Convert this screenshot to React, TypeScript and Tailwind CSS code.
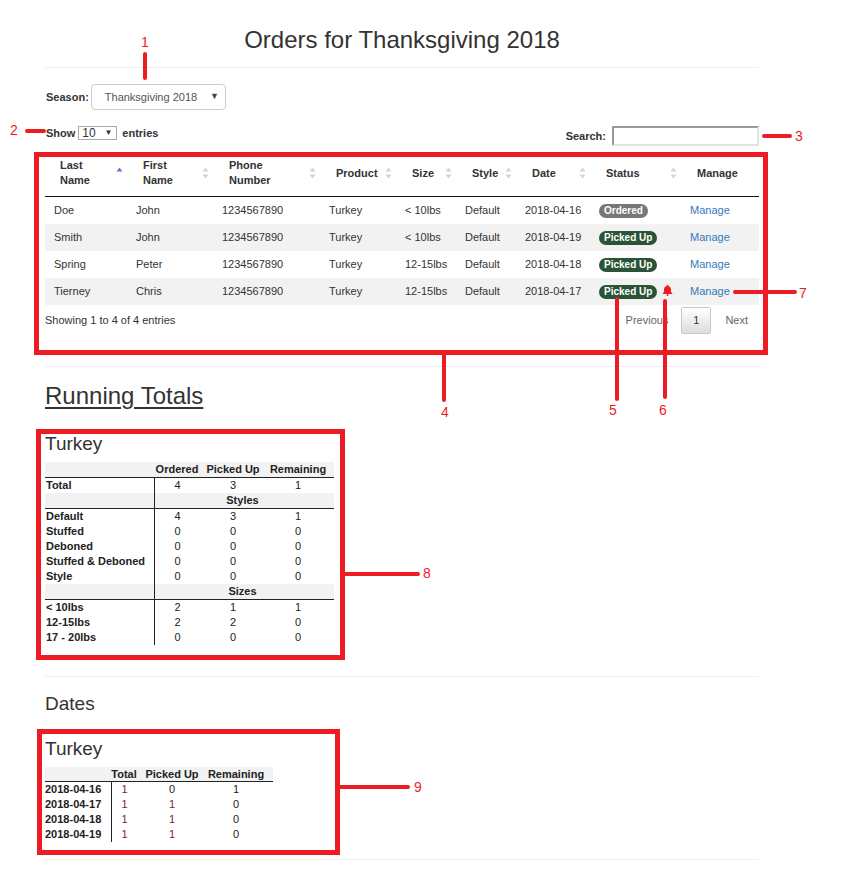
import React from "react";

/** Datos de pedidos */
const orders = [
  { last: "Doe", first: "John", phone: "1234567890", product: "Turkey", size: "< 10lbs", style: "Default", date: "2018-04-16", status: "Ordered", note: false },
  { last: "Smith", first: "John", phone: "1234567890", product: "Turkey", size: "< 10lbs", style: "Default", date: "2018-04-19", status: "Picked Up", note: false },
  { last: "Spring", first: "Peter", phone: "1234567890", product: "Turkey", size: "12-15lbs", style: "Default", date: "2018-04-18", status: "Picked Up", note: false },
  { last: "Tierney", first: "Chris", phone: "1234567890", product: "Turkey", size: "12-15lbs", style: "Default", date: "2018-04-17", status: "Picked Up", note: true },
];

const columns = [
  { label: ["Last", "Name"], w: "w-[81px]", sort: "asc", first: true },
  { label: ["First", "Name"], w: "w-[86px]", sort: "both" },
  { label: ["Phone", "Number"], w: "w-[107px]", sort: "both" },
  { label: ["Product"], w: "w-[76px]", sort: "both" },
  { label: ["Size"], w: "w-[60px]", sort: "both" },
  { label: ["Style"], w: "w-[60px]", sort: "both" },
  { label: ["Date"], w: "w-[74px]", sort: "both" },
  { label: ["Status"], w: "w-[91px]", sort: "both" },
  { label: ["Manage"], w: "w-[79px]", sort: "none" },
];

const styleRows = [
  ["Default", 4, 3, 1],
  ["Stuffed", 0, 0, 0],
  ["Deboned", 0, 0, 0],
  ["Stuffed & Deboned", 0, 0, 0],
  ["Style", 0, 0, 0],
];

const sizeRows = [
  ["< 10lbs", 2, 1, 1],
  ["12-15lbs", 2, 2, 0],
  ["17 - 20lbs", 0, 0, 0],
];

const dateRows = [
  ["2018-04-16", 1, 0, 1],
  ["2018-04-17", 1, 1, 0],
  ["2018-04-18", 1, 1, 0],
  ["2018-04-19", 1, 1, 0],
];

const SortIcon = ({ type }: { type: string }) => {
  if (type === "none") return null;
  return (
    <svg width="7" height="12" viewBox="0 0 7 12" className="shrink-0">
      <polygon points="0.5,4.5 3.5,0.5 6.5,4.5" fill={type === "asc" ? "#6f6fd6" : "#d4d4d4"} />
      {type === "both" && <polygon points="0.5,7.5 3.5,11.5 6.5,7.5" fill="#d4d4d4" />}
    </svg>
  );
};

const Bell = () => (
  <svg width="11" height="12" viewBox="0 0 11 12" className="ml-[5px] -mt-[3px]">
    <path d="M5.5 0.8c-0.5 0-0.8 0.4-0.8 0.8v0.4C3 2.4 2 3.8 2 5.6v2.3L0.6 9.4v0.7h9.8V9.4L9 7.9V5.6C9 3.8 8 2.4 6.3 2V1.6c0-0.4-0.3-0.8-0.8-0.8z" fill="#ed1c24" />
    <circle cx="5.5" cy="11" r="1" fill="#ed1c24" />
  </svg>
);

const Badge = ({ status }: { status: string }) => (
  <span
    className={
      "inline-flex h-[14px] items-center rounded-full px-[5px] text-[10px] font-bold leading-none text-white " +
      (status === "Ordered" ? "bg-[#777777]" : "bg-[#2b5436]")
    }
  >
    {status}
  </span>
);

/** Tabla de totales (Turkey) */
const TotalsSection = () => (
  <div className="w-[289px] text-[11px] leading-[15px] text-[#222]">
    <div className="flex h-[16px] border-b border-[#222] bg-[#f2f2f2] font-bold">
      <div className="w-[109px]" />
      <div className="w-[46px] text-center">Ordered</div>
      <div className="w-[66px] text-center">Picked Up</div>
      <div className="w-[68px] pr-[4px] text-center">Remaining</div>
    </div>
    <div className="flex h-[15px]">
      <div className="w-[109px] pl-[1px] font-bold">Total</div>
      <div className="w-[46px] border-l border-[#222] text-center">4</div>
      <div className="w-[66px] text-center">3</div>
      <div className="w-[68px] pr-[4px] text-center">1</div>
    </div>
    <div className="flex h-[16px] border-b border-[#222] bg-[#f2f2f2] font-bold">
      <div className="w-[109px]" />
      <div className="w-[180px] border-l border-[#222] pr-[4px] text-center">Styles</div>
    </div>
    {styleRows.map((r) => (
      <div key={r[0]} className="flex h-[15px]">
        <div className="w-[109px] pl-[1px] font-bold">{r[0]}</div>
        <div className="w-[46px] border-l border-[#222] text-center">{r[1]}</div>
        <div className="w-[66px] text-center">{r[2]}</div>
        <div className="w-[68px] pr-[4px] text-center">{r[3]}</div>
      </div>
    ))}
    <div className="flex h-[16px] border-b border-[#222] bg-[#f2f2f2] font-bold">
      <div className="w-[109px]" />
      <div className="w-[180px] border-l border-[#222] pr-[4px] text-center">Sizes</div>
    </div>
    {sizeRows.map((r) => (
      <div key={r[0]} className="flex h-[15px]">
        <div className="w-[109px] pl-[1px] font-bold">{r[0]}</div>
        <div className="w-[46px] border-l border-[#222] text-center">{r[1]}</div>
        <div className="w-[66px] text-center">{r[2]}</div>
        <div className="w-[68px] pr-[4px] text-center">{r[3]}</div>
      </div>
    ))}
  </div>
);

/** Tabla por fechas */
const DatesSection = () => (
  <div className="w-[228px] text-[11px] leading-[15px] text-[#222]">
    <div className="flex h-[15px] border-b border-[#222] bg-[#f2f2f2] font-bold leading-[14px]">
      <div className="w-[66px]" />
      <div className="w-[26px] text-center">Total</div>
      <div className="w-[70px] text-center">Picked Up</div>
      <div className="w-[66px] pr-[8px] text-center">Remaining</div>
    </div>
    {dateRows.map((r) => (
      <div key={r[0]} className="flex h-[15px]">
        <div className="w-[66px] font-bold">{r[0]}</div>
        <div className={"w-[26px] border-l border-[#222] text-center " + (Number(r[1]) > 0 ? "text-[#7a1f1f]" : "")}>{r[1]}</div>
        <div className={"w-[70px] text-center " + (Number(r[2]) > 0 ? "text-[#7a1f1f]" : "")}>{r[2]}</div>
        <div className="w-[66px] pr-[8px] text-center">{r[3]}</div>
      </div>
    ))}
  </div>
);

/** Capa de anotaciones en rojo */
const Annotations = () => (
  <div className="pointer-events-none absolute inset-0 text-[14px] leading-[16px] text-[#ed1c24]">
    <div className="absolute left-[143px] top-[52px] h-[28px] w-[4px] rounded-full bg-[#ed1c24]" />
    <div className="absolute left-[141px] top-[34px]">1</div>
    <div className="absolute left-[25px] top-[129px] h-[4px] w-[21px] rounded-full bg-[#ed1c24]" />
    <div className="absolute left-[10px] top-[122px]">2</div>
    <div className="absolute left-[762px] top-[134px] h-[4px] w-[30px] rounded-full bg-[#ed1c24]" />
    <div className="absolute left-[795px] top-[128px]">3</div>
    <div className="absolute left-[34px] top-[152px] h-[203px] w-[734px] border-[5px] border-[#ed1c24]" />
    <div className="absolute left-[442px] top-[352px] h-[50px] w-[4px] rounded-full bg-[#ed1c24]" />
    <div className="absolute left-[441px] top-[404px]">4</div>
    <div className="absolute left-[615px] top-[297px] h-[104px] w-[4px] rounded-full bg-[#ed1c24]" />
    <div className="absolute left-[609px] top-[402px]">5</div>
    <div className="absolute left-[663px] top-[299px] h-[100px] w-[4px] rounded-full bg-[#ed1c24]" />
    <div className="absolute left-[659px] top-[402px]">6</div>
    <div className="absolute left-[733px] top-[290px] h-[4px] w-[64px] rounded-full bg-[#ed1c24]" />
    <div className="absolute left-[799px] top-[285px]">7</div>
    <div className="absolute left-[36px] top-[429px] h-[231px] w-[309px] border-[5px] border-[#ed1c24]" />
    <div className="absolute left-[343px] top-[572px] h-[4px] w-[77px] rounded-full bg-[#ed1c24]" />
    <div className="absolute left-[423px] top-[565px]">8</div>
    <div className="absolute left-[37px] top-[729px] h-[126px] w-[303px] border-[5px] border-[#ed1c24]" />
    <div className="absolute left-[338px] top-[785px] h-[4px] w-[72px] rounded-full bg-[#ed1c24]" />
    <div className="absolute left-[414px] top-[779px]">9</div>
  </div>
);

export default function App() {
  return (
    <div className="relative min-h-[873px] w-[859px] overflow-hidden bg-white font-['Liberation_Sans',Arial,sans-serif] text-[#333]">
      <div className="ml-[45px] w-[714px] pb-[14px]">
        <h1 className="mt-[27px] h-[26px] text-center text-[24px] leading-[26px]">Orders for Thanksgiving 2018</h1>
        <div className="mt-[14px] border-t border-[#eeeeee]" />

        {/* Temporada */}
        <div className="mt-[16px] flex items-center">
          <span className="pl-[1px] text-[11px] font-bold">Season:</span>
          <div className="ml-[2px] flex h-[26px] w-[135px] items-center rounded-[4px] border border-[#cccccc] pl-[13px] pr-[6px] text-[11px] text-[#555]">
            <span className="flex-1">Thanksgiving 2018</span>
            <span className="text-[9px] text-[#444]">▼</span>
          </div>
        </div>

        {/* Controles de tabla */}
        <div className="mt-[16px] flex items-start justify-between text-[11px] font-bold">
          <div className="flex h-[14px] items-center gap-[3px] pl-[1px]">
            <span>Show</span>
            <div className="flex h-[14px] w-[39px] items-center border border-[#a9a9a9] pl-[3px] pr-[4px] font-normal">
              <span className="flex-1 text-[12px] leading-none">10</span>
              <span className="text-[8px] leading-none text-[#333]">▼</span>
            </div>
            <span className="ml-[2px]">entries</span>
          </div>
          <div className="flex h-[20px] items-center">
            <span className="mr-[6px]">Search:</span>
            <div className="h-[20px] w-[147px] border-2 border-b-[#e3e3e3] border-l-[#9a9a9a] border-r-[#e3e3e3] border-t-[#9a9a9a]" />
          </div>
        </div>

        {/* Tabla de pedidos */}
        <div className="mt-[10px] text-[11px] leading-[15px]">
          <div className="flex h-[41px] items-center border-b border-[#111] pb-[8px] pt-[2px] font-bold">
            {columns.map((c) => (
              <div key={c.label.join(" ")} className={c.w + " flex items-center pr-[3px] " + (c.first ? "pl-[15px]" : "pl-[17px]")}>
                <div className="flex-1">
                  {c.label.map((l) => (
                    <div key={l}>{l}</div>
                  ))}
                </div>
                <SortIcon type={c.sort} />
              </div>
            ))}
          </div>
          {orders.map((o, i) => (
            <div key={o.last} className={"flex h-[27px] items-center " + (i % 2 === 1 ? "bg-[#f2f2f2]" : "")}>
              <div className="w-[81px] pl-[9px]">{o.last}</div>
              <div className="w-[86px] pl-[10px]">{o.first}</div>
              <div className="w-[107px] pl-[10px]">{o.phone}</div>
              <div className="w-[76px] pl-[10px]">{o.product}</div>
              <div className="w-[60px] pl-[10px]">{o.size}</div>
              <div className="w-[60px] pl-[10px]">{o.style}</div>
              <div className="w-[74px] pl-[10px]">{o.date}</div>
              <div className="flex w-[91px] items-center pl-[10px]">
                <Badge status={o.status} />
                {o.note && <Bell />}
              </div>
              <div className="w-[79px] pl-[10px] text-[#337ab7]">Manage</div>
            </div>
          ))}
          <div className="flex items-center justify-between pt-[2px]">
            <span>Showing 1 to 4 of 4 entries</span>
            <div className="flex items-center text-[#666]">
              <span className="pl-[12px] pr-[13px]">Previous</span>
              <span className="flex h-[27px] w-[30px] items-center justify-center rounded-[2px] border border-[#c8c8c8] bg-gradient-to-b from-white to-[#dcdcdc] text-[#333]">
                1
              </span>
              <span className="pl-[14px] pr-[11px]">Next</span>
            </div>
          </div>
        </div>

        <div className="mt-[32px] border-t border-[#eeeeee]" />

        <h2 className="mt-[16px] h-[26px] text-[24px] leading-[26px] underline decoration-2 underline-offset-[3px]">Running Totals</h2>
        <h3 className="mt-[25px] h-[20px] text-[19px] leading-[20px]">Turkey</h3>
        <div className="mt-[8px]">
          <TotalsSection />
        </div>

        <div className="mt-[31px] border-t border-[#eeeeee]" />

        <h2 className="mt-[17px] h-[20px] text-[19px] leading-[20px]">Dates</h2>
        <h3 className="mt-[25px] h-[20px] text-[19px] leading-[20px]">Turkey</h3>
        <div className="mt-[8px]">
          <DatesSection />
        </div>

        <div className="mt-[17px] border-t border-[#eeeeee]" />
      </div>
      <Annotations />
    </div>
  );
}
